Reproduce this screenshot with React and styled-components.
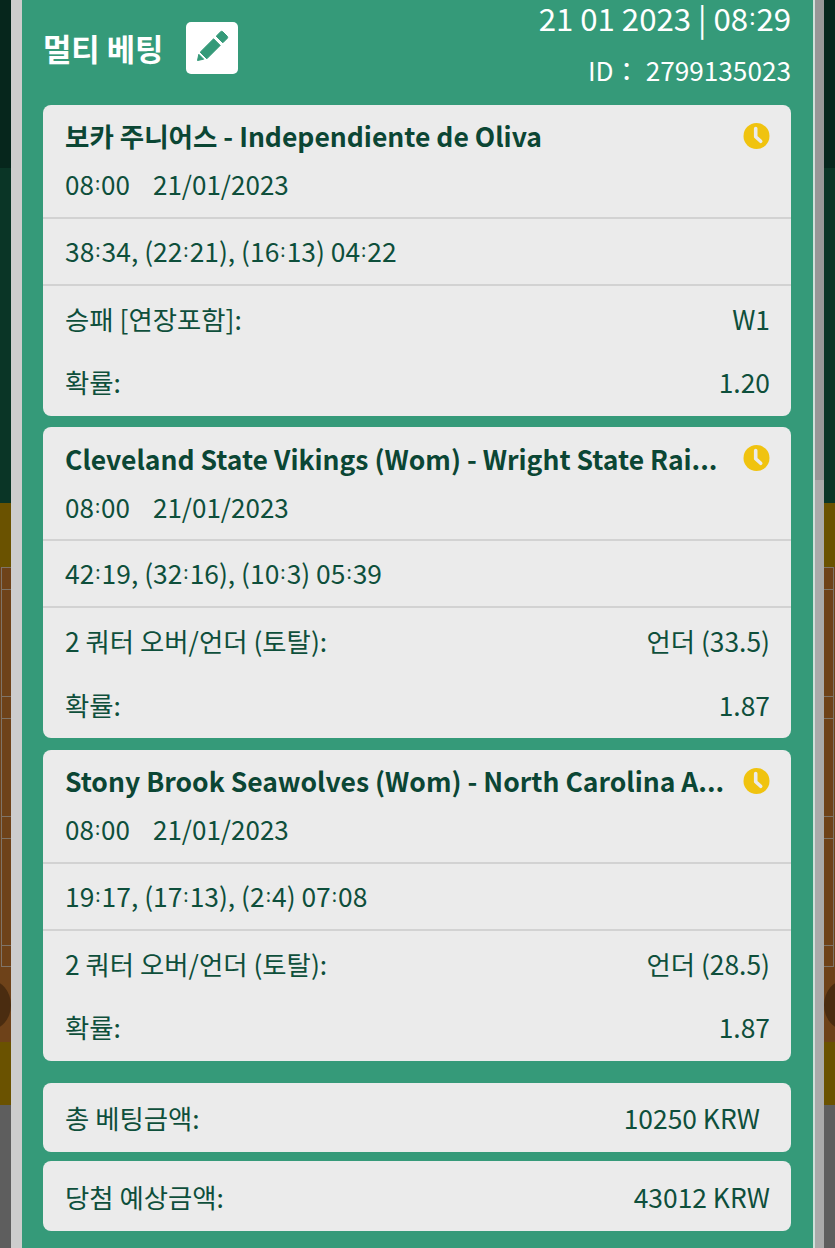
import React from 'react'
import styled, { createGlobalStyle } from 'styled-components'

const GlobalStyle = createGlobalStyle`
  html, body {
    margin: 0;
    padding: 0;
    height: 1248px;
    overflow: hidden;
    background: #5e5e5e;
    font-family: "Noto Sans CJK KR", "Noto Sans", sans-serif;
  }
`

const bets = [
  { id: 1, title: '보카 주니어스 - Independiente de Oliva', score: '38:34, (22:21), (16:13) 04:22', market: '승패 [연장포함]:', pick: 'W1', odds: '1.20' },
  { id: 2, title: 'Cleveland State Vikings (Wom) - Wright State Rai...', score: '42:19, (32:16), (10:3) 05:39', market: '2 쿼터 오버/언더 (토탈):', pick: '언더 (33.5)', odds: '1.87' },
  { id: 3, title: 'Stony Brook Seawolves (Wom) - North Carolina A...', score: '19:17, (17:13), (2:4) 07:08', market: '2 쿼터 오버/언더 (토탈):', pick: '언더 (28.5)', odds: '1.87' },
]

const courtRows = [
  { id: 'a', height: 22 },
  { id: 'b', height: 107 },
  { id: 'c', height: 22 },
  { id: 'd', height: 98 },
  { id: 'e', height: 22 },
  { id: 'f', height: 107 },
  { id: 'g', height: 22 },
]

// the colon between digits sits high and small in the original
function Clock({ value }) {
  const parts = value.split(/(?<=\d):(?=\d)/)
  return parts.map((part, i) => (
    <React.Fragment key={i}>
      {i > 0 && <Colon>:</Colon>}
      {part}
    </React.Fragment>
  ))
}

function ClockIcon() {
  return (
    <ClockSvg viewBox="0 0 27 26">
      <circle cx="13.5" cy="13" r="13" fill="#f0c30f" />
      <path d="M12.7 5.5v8.2l5 4.6" fill="none" stroke="#ebebeb" strokeWidth="3.6" strokeLinecap="round" strokeLinejoin="round" />
    </ClockSvg>
  )
}

function PencilIcon() {
  return (
    <svg width="52" height="52" viewBox="0 0 52 52">
      <g fill="#359a79" stroke="#359a79" strokeWidth="1" strokeLinejoin="round">
        <path d="M14.2 30.2l13.4-13.4 6.6 6.6-13.4 13.4z" />
        <path d="M30.2 14.2l4.4-4.4a1.6 1.6 0 0 1 2.2 0l4.4 4.4a1.6 1.6 0 0 1 0 2.2l-4.4 4.4z" />
        <path d="M11.5 38.5l1.3-6.2 4.9 4.9z" />
      </g>
    </svg>
  )
}

function BetCard({ bet }) {
  return (
    <Card>
      <CardHead>
        <TitleRow>
          <Title>{bet.title}</Title>
          <ClockIcon />
        </TitleRow>
        <DateRow>
          <span><Clock value="08:00" /></span>
          <span>21/01/2023</span>
        </DateRow>
      </CardHead>
      <ScoreRow><Clock value={bet.score} /></ScoreRow>
      <InfoRow>
        <span>{bet.market}</span>
        <span>{bet.pick}</span>
      </InfoRow>
      <InfoRow>
        <span>확률:</span>
        <span>{bet.odds}</span>
      </InfoRow>
    </Card>
  )
}

export default function App() {
  return (
    <>
      <GlobalStyle />
      <Backdrop>
        <Band $height={168} $color="#06261c" />
        <Band $height={335} $color="#0a3526" />
        <Band $height={64} $color="#6a5200" />
        <Court>
          {courtRows.map((row) => (
            <CourtRow key={row.id} $height={row.height} />
          ))}
          <CourtFoot>
            <Puck $side="left" />
            <Puck $side="right" />
          </CourtFoot>
        </Court>
        <Band $height={63} $color="#6a5200" />
        <Band $height={143} $color="#5e5e5e" />
      </Backdrop>

      <Overlay>
        <Modal>
          <Header>
            <HeaderLeft>
              <Heading>멀티 베팅</Heading>
              <EditButton>
                <PencilIcon />
              </EditButton>
            </HeaderLeft>
            <HeaderRight>
              <Stamp><Clock value="21 01 2023 | 08:29" /></Stamp>
              <TicketId>ID： 2799135023</TicketId>
            </HeaderRight>
          </Header>
          <CardList>
            {bets.map((bet) => (
              <BetCard key={bet.id} bet={bet} />
            ))}
          </CardList>
          <Totals>
            <TotalCard>
              <span>총 베팅금액:</span>
              <TotalValue $inset={10}>10250 KRW</TotalValue>
            </TotalCard>
            <TotalCard>
              <span>당첨 예상금액:</span>
              <TotalValue>43012 KRW</TotalValue>
            </TotalCard>
          </Totals>
        </Modal>
        <Scrollbar>
          <ScrollThumb />
        </Scrollbar>
      </Overlay>
    </>
  )
}

const Colon = styled.span`
  font-size: 0.72em;
  line-height: 1;
  vertical-align: 0.26em;
  padding: 0 1px;
`

const Backdrop = styled.div`
  display: flex;
  flex-direction: column;
  height: 1248px;
  overflow: hidden;
`

const Band = styled.div`
  flex: none;
  height: ${(p) => p.$height}px;
  background: ${(p) => p.$color};
`

const Court = styled.div`
  flex: none;
  height: 475px;
  display: flex;
  flex-direction: column;
  background: #6e4219;
`

const CourtRow = styled.div`
  flex: none;
  box-sizing: border-box;
  height: ${(p) => p.$height}px;
  border-top: 1px solid #7f7468;
  border-left: 1px solid #7f7468;
  border-right: 1px solid #7f7468;
  margin: 0 1px;
  &:nth-child(7) {
    border-bottom: 1px solid #7f7468;
  }
`

const CourtFoot = styled.div`
  flex: 1;
  display: flex;
  justify-content: space-between;
  align-items: center;
  overflow: hidden;
`

const Puck = styled.div`
  width: 44px;
  height: 50px;
  border-radius: 50%;
  background: #4a2c10;
  margin-${(p) => p.$side}: -33px;
`

const Overlay = styled.div`
  position: absolute;
  inset: 0;
  display: flex;
  height: 1248px;
  padding-left: 11px;
  overflow: hidden;
`

const Modal = styled.div`
  box-sizing: border-box;
  width: 804px;
  height: 1248px;
  padding: 0 22px 0 21px;
  background: #359a79;
  border-left: 11px solid #cdcdcd;
  border-right: 2px solid #cfe0d9;
`

const Header = styled.div`
  display: flex;
  justify-content: space-between;
  height: 104.8px;
  color: #fff;
`

const HeaderLeft = styled.div`
  display: flex;
  align-items: center;
  gap: 23px;
  height: 95px;
`

const Heading = styled.h2`
  margin: 0;
  font-size: 30.8px;
  font-weight: 700;
  line-height: 40px;
`

const EditButton = styled.div`
  display: flex;
  align-items: center;
  justify-content: center;
  width: 52px;
  height: 52px;
  border-radius: 5px;
  background: #fff;
`

const HeaderRight = styled.div`
  display: flex;
  flex-direction: column;
  align-items: flex-end;
`

const Stamp = styled.div`
  font-size: 31.2px;
  line-height: 36px;
`

const TicketId = styled.div`
  margin-top: 14px;
  font-size: 26.2px;
  line-height: 40px;
`

const CardList = styled.div`
  display: flex;
  flex-direction: column;
  gap: 11.5px;
`

const Card = styled.div`
  box-sizing: border-box;
  height: 311px;
  border-radius: 8px;
  background: #ebebeb;
  color: #0e4f3b;
  font-size: 26.4px;
`

const CardHead = styled.div`
  box-sizing: border-box;
  height: 114px;
  padding: 12.5px 21px 0 22px;
  border-bottom: 2px solid #d2d2d2;
`

const TitleRow = styled.div`
  display: flex;
  justify-content: space-between;
`

const Title = styled.div`
  flex: 1;
  min-width: 0;
  font-size: 26.5px;
  font-weight: 700;
  line-height: 38px;
  white-space: nowrap;
  color: #0b4634;
`

const ClockSvg = styled.svg`
  flex: none;
  width: 27px;
  height: 26px;
  margin-top: 5.5px;
`

const DateRow = styled.div`
  display: flex;
  gap: 23px;
  height: 38px;
  margin-top: 10px;
  font-size: 26px;
  line-height: 38px;
`

const ScoreRow = styled.div`
  box-sizing: border-box;
  height: 67px;
  padding: 13px 22px 0;
  line-height: 38px;
  border-bottom: 2px solid #d2d2d2;
`

const InfoRow = styled.div`
  display: flex;
  justify-content: space-between;
  height: 63.5px;
  padding: 14px 21px 0 22px;
  box-sizing: border-box;
  line-height: 38px;
`

const Totals = styled.div`
  display: flex;
  flex-direction: column;
  gap: 9px;
  margin-top: 22px;
`

const TotalCard = styled.div`
  display: flex;
  justify-content: space-between;
  align-items: center;
  box-sizing: border-box;
  height: 69.5px;
  padding: 0 21px 0 22px;
  border-radius: 8px;
  background: #ebebeb;
  color: #0e4f3b;
  font-size: 26.4px;
`

const TotalValue = styled.span`
  margin-right: ${(p) => p.$inset || 0}px;
`

const Scrollbar = styled.div`
  flex: none;
  width: 9px;
  height: 1248px;
  background: #aaaaaa;
`

const ScrollThumb = styled.div`
  height: 480px;
  background: #979797;
`
